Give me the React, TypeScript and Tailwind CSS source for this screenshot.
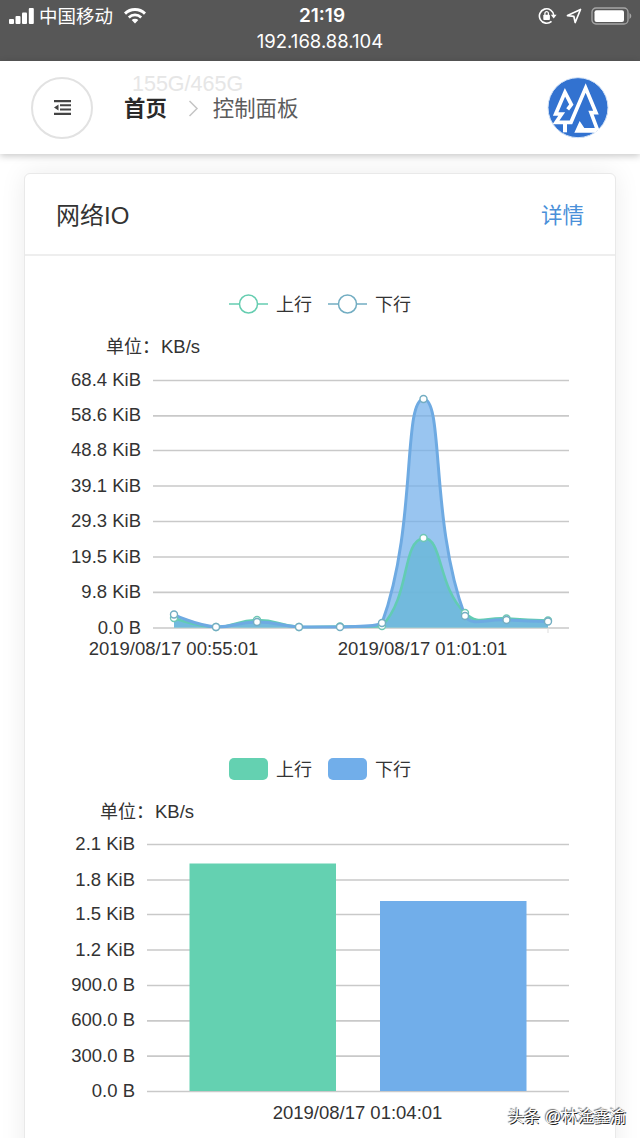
import React from "react";

const GREEN = "#64d1b1";
const BLUE = "#71aeea";

type Point = [number, number];

const xs = [174, 216, 257, 299, 340, 382, 423.5, 465, 506.5, 548];
const upload: Point[] = [618, 627, 620, 627, 626.5, 626, 538, 613, 618.5, 620.5].map((y, i) => [xs[i], y]);
const download: Point[] = [614.5, 627, 622, 627, 627, 623, 399, 616, 620, 621.5].map((y, i) => [xs[i], y]);

// Smooth curve through all points, control points kept inside the bounding box
const smoothPath = (points: Point[], smooth = 0.5) => {
  const ys = points.map((p) => p[1]);
  const min = Math.min(...ys);
  const max = Math.max(...ys);
  const clamp = (y: number) => Math.max(min, Math.min(max, y));
  const dist = (a: Point, b: Point) => Math.hypot(a[0] - b[0], a[1] - b[1]);

  let d = `M${points[0][0]} ${points[0][1]}`;
  let cp0: Point = points[0];
  for (let i = 1; i < points.length; i++) {
    const p = points[i];
    const prev = points[i - 1];
    const next = points[i + 1] ?? p;
    const ratio = dist(p, next) / (dist(p, next) + dist(p, prev));
    const v = [next[0] - prev[0], next[1] - prev[1]];
    const cp1: Point =
      next === p ? p : [p[0] - v[0] * smooth * (1 - ratio), clamp(p[1] - v[1] * smooth * (1 - ratio))];
    d += ` C${cp0[0]} ${cp0[1]} ${cp1[0]} ${cp1[1]} ${p[0]} ${p[1]}`;
    cp0 = [p[0] + v[0] * smooth * ratio, clamp(p[1] + v[1] * smooth * ratio)];
  }
  return d;
};

const StatusBar = () => (
  <div className="h-[61px] bg-[#575757] text-white">
    <div className="grid h-8 grid-cols-3 items-center pl-[9px] pr-[8px]">
      <div className="flex items-center">
        <svg width="25" height="16" viewBox="0 0 25 16" fill="currentColor">
          <rect x="0" y="11" width="5" height="5" rx="1" />
          <rect x="6.500" y="8" width="5" height="8" rx="1" />
          <rect x="13" y="4.500" width="5" height="11.500" rx="1" />
          <rect x="19.800" y="0" width="5" height="16" rx="1" />
        </svg>
        <span className="ml-[5px] pt-px text-[18.5px] leading-[31px]">中国移动</span>
        <svg className="ml-[11px]" width="22" height="16" viewBox="0 0 22 16" fill="none" stroke="currentColor">
          <path d="M1 5.600a14.500 14.500 0 0 1 20 0" strokeWidth="3" />
          <path d="M4.800 9.400a9 9 0 0 1 12.400 0" strokeWidth="2.700" />
          <path d="M11 15.500l-3.300-3.400a4.700 4.700 0 0 1 6.600 0z" fill="currentColor" stroke="none" />
        </svg>
      </div>
      <span className="pl-[3px] text-center font-[Inter] text-[19px] font-semibold leading-8">21:19</span>
      <div className="flex items-center justify-end">
        <svg width="19" height="18" viewBox="0 0 19 18" fill="none" stroke="currentColor" strokeWidth="1.600">
          <path d="M13.500 14.300A7.200 7.200 0 1 1 15.800 8.500" />
          <path d="M12.800 7.800h5.800L15.700 11.500z" fill="currentColor" stroke="none" />
          <rect x="5.300" y="7.800" width="6.600" height="5.200" rx="0.800" fill="currentColor" stroke="none" />
          <path d="M6.900 8V6.400a1.750 1.750 0 0 1 3.500 0V8" strokeWidth="1.300" />
        </svg>
        <svg className="ml-[9px]" width="16" height="16" viewBox="0 0 16 16" fill="none" stroke="currentColor" strokeWidth="1.700">
          <path d="M1.500 7.600L14.500 1.500L9.200 14.500L7.800 8.300z" strokeLinejoin="round" />
        </svg>
        <svg className="-mt-px ml-[9px]" width="41" height="18" viewBox="0 0 41 18">
          <rect x="1" y="1" width="36" height="16" rx="4" fill="none" stroke="#a5a5a5" strokeWidth="1.300" />
          <rect x="3.500" y="3.200" width="29.500" height="11.800" rx="2" fill="#fff" />
          <path d="M38.500 6v6q1.800-1 1.800-3t-1.800-3" fill="#a5a5a5" />
        </svg>
      </div>
    </div>
    <p className="-mt-px text-center font-[Inter] text-[18.5px] leading-5">192.168.88.104</p>
  </div>
);

const Logo = () => (
  <svg width="62" height="62" viewBox="0 0 186 186">
    <circle cx="93" cy="92" r="90" fill="#3272d0" stroke="#d3e3f7" strokeWidth="3" />
    <g fill="none" stroke="#fff" strokeWidth="11">
      <path d="M62 97L73 83L54 46L26 111H44L27 136H72L116 33L147 107H132L152 160" />
      <path d="M54 136V166" strokeWidth="12" />
    </g>
    <path d="M82 167L98 132L112 153H154L146 167z" fill="#fff" />
  </svg>
);

const Header = () => (
  <header className="relative z-10 flex h-[93px] items-center bg-white pl-[31px] pr-[31px] shadow-[0_2px_7px_rgba(0,0,0,0.22)]">
    <button className="flex size-[62px] items-center justify-center rounded-full border-2 border-[#e2e2e2]">
      <svg width="17" height="15" viewBox="0 0 17 15" fill="#444">
        <path d="M0 0h17v2.200H0zM6 4.300h11v2H6zM6 8.600h11v2H6zM0 12.800h17V15H0zM0 7.500l4.500-3v6z" />
      </svg>
    </button>
    <span className="absolute left-[132px] top-[9px] text-[21.5px] leading-7 text-[#e6e6e6]">155G/465G</span>
    <nav className="relative ml-[31px] flex items-center pt-[4px] text-[21.4px]">
      <span className="font-bold text-[#292929]">首页</span>
      <svg className="ml-[21px] mr-[14px]" width="11" height="18" viewBox="0 0 11 18" fill="none" stroke="#c5c5c5" strokeWidth="1.500">
        <path d="M1.500 1L9 8.500L1.500 16" />
      </svg>
      <span className="text-[#5c5c5c]">控制面板</span>
    </nav>
    <div className="ml-auto">
      <Logo />
    </div>
  </header>
);

const Legend = ({ kind }: { kind: "line" | "bar" }) => (
  <div className="flex h-6 items-center justify-center gap-4 text-[18px] leading-6">
    {[
      { name: "上行", color: GREEN, stroke: "#65cdb0" },
      { name: "下行", color: BLUE, stroke: "#72adc2" },
    ].map((item) => (
      <div key={item.name} className="flex items-center gap-2">
        <svg width="39" height="22" viewBox="0 0 39 22">
          {kind === "line" ? (
            <>
              <path d="M0 11H39" stroke={item.stroke} strokeWidth="1.700" />
              <circle cx="19.500" cy="11" r="9" fill="#fff" stroke={item.stroke} strokeWidth="1.500" />
            </>
          ) : (
            <rect width="39" height="22" rx="5" fill={item.color} />
          )}
        </svg>
        <span className="pt-0.5">{item.name}</span>
      </div>
    ))}
  </div>
);

const Unit = () => (
  <>
    单位：<span className="ml-px text-[18.5px]">KB/s</span>
  </>
);

const Grid = ({ labels, ticks, x }: { labels: string[]; ticks: number[]; x: number }) => (
  <>
    {labels.map((label, i) => (
      <g key={label}>
        <path d={`M${x} ${ticks[i]}H569`} stroke="#c9c9c9" strokeWidth="1.700" />
        <text x={x - 12} y={ticks[i] + 5.5} textAnchor="end">
          {label}
        </text>
      </g>
    ))}
  </>
);

const LineChart = () => {
  const up = smoothPath(upload);
  const down = smoothPath(download);
  return (
    <svg className="block" width="590" height="300" viewBox="25 365 590 300" fontSize="18.500" fill="#333">
      <Grid
        x={153}
        ticks={[380.5, 415.8, 450.5, 486, 521.5, 557, 592.3, 628]}
        labels={["68.4 KiB", "58.6 KiB", "48.8 KiB", "39.1 KiB", "29.3 KiB", "19.5 KiB", "9.8 KiB", "0.0 B"]}
      />
      <path d="M548 628v5" stroke="#ddd" />
      <path d={`${up} V627.500 H174 Z`} fill={GREEN} fillOpacity="0.9" />
      <path d={`${down} V627.500 H174 Z`} fill={BLUE} fillOpacity="0.72" />
      <path d={up} fill="none" stroke="#62ccb3" strokeWidth="2.600" />
      <path d={down} fill="none" stroke="#6eaae2" strokeWidth="3" />
      {[...upload, ...download].map(([cx, cy], i) => (
        <circle key={i} cx={cx} cy={cy} r="3.500" fill="#fff" stroke={i < 10 ? "#6fc7b5" : "#73adc2"} strokeWidth="1.400" />
      ))}
      <text x="173.500" y="655" textAnchor="middle">2019/08/17 00:55:01</text>
      <text x="422.500" y="655" textAnchor="middle">2019/08/17 01:01:01</text>
    </svg>
  );
};

const BarChart = () => (
  <svg className="block" width="590" height="300" viewBox="25 830 590 300" fontSize="18.500" fill="#333">
    <Grid
      x={147}
      ticks={[844.5, 880, 914.5, 950, 985.5, 1020.8, 1056.2, 1091.5]}
      labels={["2.1 KiB", "1.8 KiB", "1.5 KiB", "1.2 KiB", "900.0 B", "600.0 B", "300.0 B", "0.0 B"]}
    />
    <rect x="189.500" y="863.500" width="146.500" height="227.500" fill={GREEN} />
    <rect x="380" y="901" width="146.500" height="190" fill={BLUE} />
    <text x="357.500" y="1119" textAnchor="middle">2019/08/17 01:04:01</text>
  </svg>
);

const NetworkCard = () => (
  <section className="mx-6 mt-[19px] h-[990px] rounded-md border border-[#e9e9e9] bg-white shadow-[0_0_26px_rgba(0,0,0,0.08)]">
    <div className="flex h-[82px] items-center justify-between border-b-2 border-[#eeeeee] px-[31px]">
      <h2 className="pt-[3px] text-[24px] text-[#333]">网络IO</h2>
      <a className="pt-[4px] text-[21.5px] text-[#4a90d9]">详情</a>
    </div>
    <div className="pt-[36px]">
      <Legend kind="line" />
      <p className="ml-[81px] mt-[19px] h-[30px] text-[18px] leading-6">
        <Unit />
      </p>
      <LineChart />
    </div>
    <div className="pt-[92px]">
      <Legend kind="bar" />
      <p className="ml-[75px] mt-[19px] h-[30px] text-[18px] leading-6">
        <Unit />
      </p>
      <BarChart />
    </div>
  </section>
);

const App = () => {
  return (
    <div className="relative h-[1138px] w-[640px] overflow-hidden bg-white font-['Liberation_Sans','Noto_Sans_CJK_SC',sans-serif] text-[#333]">
      <StatusBar />
      <Header />
      <NetworkCard />
      <span className="absolute bottom-[10px] right-[14px] whitespace-nowrap text-[16.2px] leading-6 text-white [text-shadow:1px_1px_0_#222,-1px_-1px_1px_#666]">
        头条 @林淦鑫渝
      </span>
    </div>
  );
};

export default App;
